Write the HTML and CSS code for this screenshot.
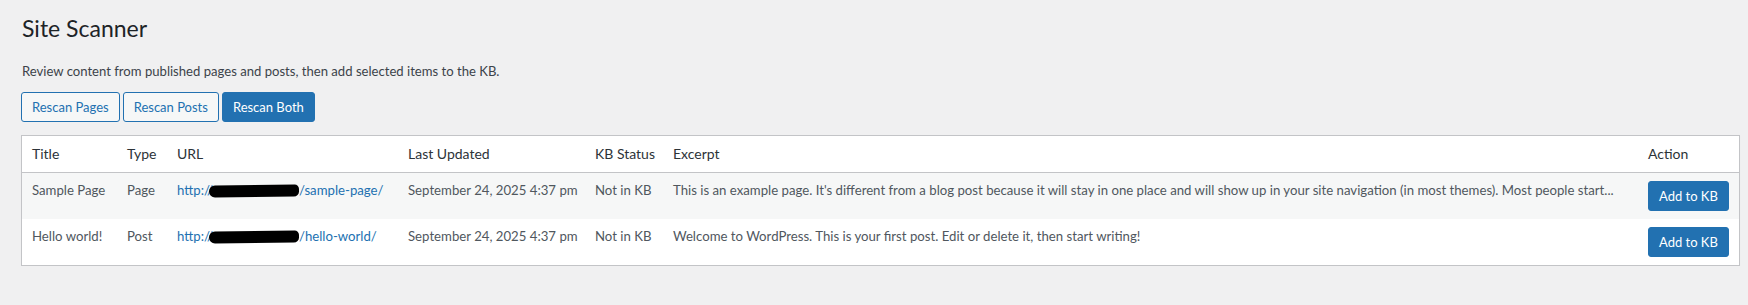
FILE: index.html
```html
<!DOCTYPE html>
<html lang="en">
<head>
<meta charset="utf-8">
<title>Site Scanner</title>
<link rel="stylesheet" href="styles.css">
</head>
<body>
<div class="wrap">
  <h1 class="page-title">Site Scanner</h1>
  <p class="description">Review content from published pages and posts, then add selected items to the KB.</p>
  <div class="actions">
    <button class="button">Rescan Pages</button>
    <button class="button">Rescan Posts</button>
    <button class="button button-primary">Rescan Both</button>
  </div>
  <table class="widefat">
    <colgroup>
      <col class="c-title">
      <col class="c-type">
      <col class="c-url">
      <col class="c-date">
      <col class="c-status">
      <col class="c-excerpt">
      <col class="c-action">
    </colgroup>
    <thead>
      <tr>
        <th>Title</th>
        <th>Type</th>
        <th>URL</th>
        <th>Last Updated</th>
        <th>KB Status</th>
        <th>Excerpt</th>
        <th>Action</th>
      </tr>
    </thead>
    <tbody>
      <tr class="alt">
        <td>Sample Page</td>
        <td>Page</td>
        <td><a href="#">http://<span class="redact"></span>/sample-page/</a></td>
        <td>September 24, 2025 4:37 pm</td>
        <td>Not in KB</td>
        <td class="excerpt">This is an example page. It's different from a blog post because it will stay in one place and will show up in your site navigation (in most themes). Most people start...</td>
        <td><button class="button button-primary">Add to KB</button></td>
      </tr>
      <tr>
        <td>Hello world!</td>
        <td>Post</td>
        <td><a href="#">http://<span class="redact"></span>/hello-world/</a></td>
        <td>September 24, 2025 4:37 pm</td>
        <td>Not in KB</td>
        <td class="excerpt">Welcome to WordPress. This is your first post. Edit or delete it, then start writing!</td>
        <td><button class="button button-primary">Add to KB</button></td>
      </tr>
    </tbody>
  </table>
</div>
</body>
</html>
```
FILE: styles.css
```css
html, body {
  margin: 0;
  padding: 0;
  background: #f0f0f1;
}

body {
  font-family: Lato, "Liberation Sans", sans-serif;
  font-size: 13.2px;
  color: #3c434a;
}

.wrap {
  padding: 0 8px 0 21px;
}

.page-title {
  margin: 0;
  padding: 13px 0 0 1px;
  font-size: 23px;
  font-weight: 400;
  line-height: 30px;
  color: #1d2327;
}

.description {
  margin: 18px 0 11px 1px;
  font-size: 13.1px;
  line-height: 20px;
  color: #3c434a;
}

.actions {
  display: flex;
  gap: 3px;
}

.button {
  box-sizing: border-box;
  height: 30px;
  margin: 0;
  padding: 0 10px;
  font-family: inherit;
  font-size: 13px;
  line-height: 28px;
  color: #2271b1;
  background: #f6f7f7;
  border: 1px solid #2271b1;
  border-radius: 3px;
  cursor: pointer;
  white-space: nowrap;
}

.button-primary {
  color: #fff;
  background: #2271b1;
  border-color: #2271b1;
}

.widefat {
  width: 100%;
  margin-top: 13px;
  table-layout: fixed;
  border-collapse: separate;
  border-spacing: 0;
  background: #fff;
  border: 1px solid #c3c4c7;
  box-shadow: 0 1px 1px rgba(0, 0, 0, 0.04);
}

.c-title { width: 95px; }
.c-type { width: 50px; }
.c-url { width: 231px; }
.c-date { width: 187px; }
.c-status { width: 78px; }
.c-excerpt { width: 975px; }
.c-action { width: 101px; }

.widefat th {
  padding: 8px 10px;
  text-align: left;
  font-size: 14px;
  font-weight: 400;
  line-height: 19.6px;
  color: #2c3338;
  border-bottom: 1px solid #c3c4c7;
  white-space: nowrap;
}

.widefat td {
  padding: 8px 10px;
  vertical-align: top;
  line-height: 19.5px;
  color: #50575e;
  white-space: nowrap;
  overflow: hidden;
}

.widefat tr.alt td {
  background: #f6f7f7;
}

.widefat a {
  color: #2271b1;
  text-decoration: none;
}

.redact {
  display: inline-block;
  width: 90px;
  height: 12px;
  margin-left: -4px;
  vertical-align: -2px;
  background: #000;
  border-radius: 7px 5px 6px 7px;
  transform: rotate(-0.6deg);
}
```
